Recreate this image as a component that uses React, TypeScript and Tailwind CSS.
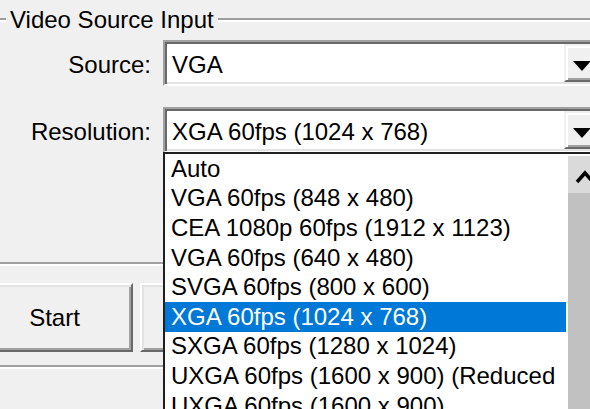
import { ReactNode } from "react";

const resolutions = [
    "Auto",
    "VGA 60fps (848 x 480)",
    "CEA 1080p 60fps (1912 x 1123)",
    "VGA 60fps (640 x 480)",
    "SVGA 60fps (800 x 600)",
    "XGA 60fps (1024 x 768)",
    "SXGA 60fps (1280 x 1024)",
    "UXGA 60fps (1600 x 900) (Reduced",
    "UXGA 60fps (1600 x 900)",
];

const selected = 5;

function Etched({ className = "" }: { className?: string }) {
    return <div className={"h-[4px] border-t-2 border-b-2 border-t-[#a0a0a0] border-b-white " + className} />;
}

function DownArrow() {
    return (
        <svg width="18" height="10" viewBox="0 0 18 10" className="mt-[6px]">
            <polygon points="0,0 18,0 9,10" fill="#000" />
        </svg>
    );
}

function Combo({ value }: { value: string }) {
    return (
        <div className="h-[46px] w-[441px] shrink-0 bg-white border-2 border-t-[#a0a0a0] border-l-[#a0a0a0] border-r-white border-b-white shadow-[inset_2px_2px_0_#696969,inset_-2px_-2px_0_#e3e3e3] p-[2px] flex">
            <div className="flex-1 flex items-center pl-[5px] pt-[4px] whitespace-nowrap">{value}</div>
            <div className="w-[36px] h-full bg-[#f0f0f0] border-2 border-t-[#f0f0f0] border-l-[#f0f0f0] border-r-[#696969] border-b-[#696969] shadow-[inset_2px_2px_0_#ffffff,inset_-2px_-2px_0_#a0a0a0] flex items-center justify-center">
                <DownArrow />
            </div>
        </div>
    );
}

function Row({ label, children, className = "" }: { label: string; children: ReactNode; className?: string }) {
    return (
        <div className={"flex items-center " + className}>
            <div className="w-[152px] shrink-0 text-right pt-[4px] pr-[1px] whitespace-nowrap">{label}</div>
            <div className="w-[11px] shrink-0" />
            {children}
        </div>
    );
}

function ClassicButton({ label }: { label?: string }) {
    return (
        <div className="h-[69px] w-[157px] shrink-0 bg-[#f0f0f0] border-2 border-t-white border-l-white border-r-[#696969] border-b-[#696969] shadow-[inset_2px_2px_0_#e3e3e3,inset_-2px_-2px_0_#a0a0a0] flex items-center justify-center">
            {label}
        </div>
    );
}

export default function App() {
    return (
        <div className="relative w-[590px] h-[409px] overflow-hidden bg-[#f0f0f0] text-black text-[24px] leading-[28px] font-['Liberation_Sans',Arial,sans-serif]">
            {/* group box header */}
            <div className="h-[40px] flex items-center">
                <Etched className="w-[6px]" />
                <span className="px-[4px]">Video Source Input</span>
                <Etched className="flex-1" />
            </div>

            <Row label="Source:">
                <Combo value="VGA" />
            </Row>
            <Row label="Resolution:" className="mt-[21px]">
                <Combo value="XGA 60fps (1024 x 768)" />
            </Row>

            <Etched className="mt-[109px] w-full" />

            <div className="mt-[17px] flex gap-[7px] ml-[-24px]">
                <ClassicButton label="Start" />
                <ClassicButton />
            </div>

            <Etched className="mt-[13px] w-full" />

            {/* open dropdown list */}
            <div className="absolute left-[163px] top-[152px] w-[440px] h-[280px] bg-white border-2 border-[#202020] flex">
                <div className="w-[401px] shrink-0 flex flex-col">
                    {resolutions.map((r, i) => (
                        <div
                            key={r}
                            className={
                                "h-[29.6px] shrink-0 flex items-center pl-[6px] whitespace-nowrap overflow-hidden " +
                                (i === selected ? "bg-[#0078d7] text-white" : "")
                            }
                        >
                            {r}
                        </div>
                    ))}
                </div>
                <div className="w-[2px] shrink-0" />
                <div className="w-[36px] shrink-0 mt-[2px] flex flex-col">
                    <div className="h-[37px] bg-[#dadada] flex items-start">
                        <svg width="36" height="37" viewBox="0 0 36 37">
                            <polyline points="9,26 17,17 25,26" fill="none" stroke="#000" strokeWidth="3.5" />
                        </svg>
                    </div>
                    <div className="flex-1 bg-[#c1c1c1]" />
                </div>
            </div>
        </div>
    );
}
